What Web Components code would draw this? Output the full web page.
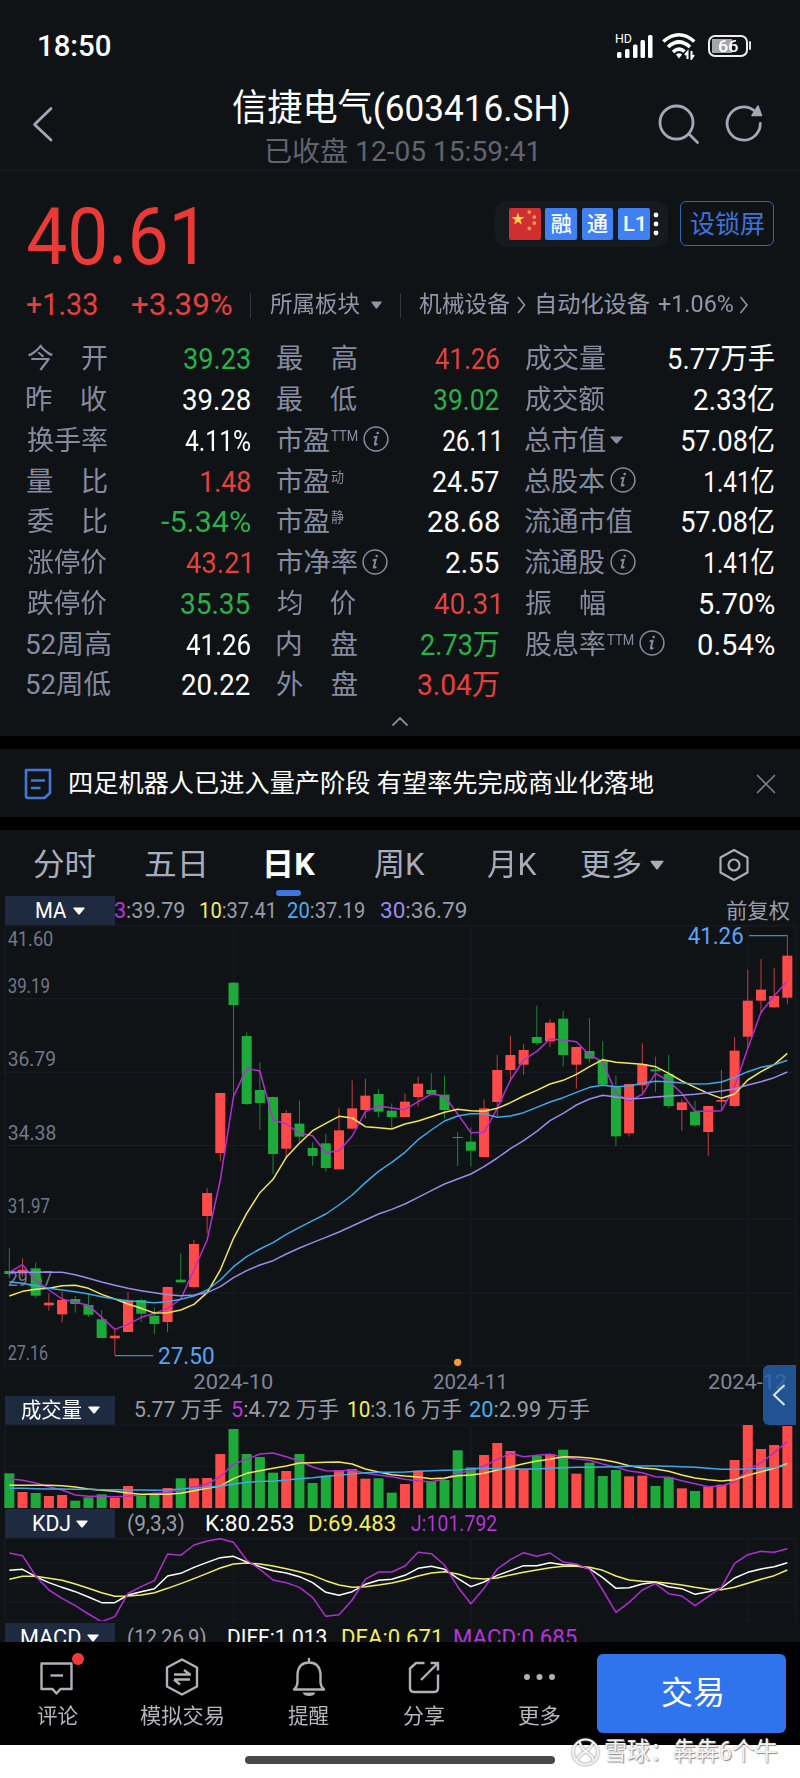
<!DOCTYPE html>
<html lang="zh-CN">
<head>
<meta charset="utf-8">
<title>信捷电气</title>
<style>
html,body{margin:0;background:#000}
body{width:800px;height:1778px;overflow:hidden;font-family:Roboto,"Noto Sans CJK SC",sans-serif;color:#fff}
</style>
</head>
<body>
<stock-app></stock-app>
<script>
const make = (name, html, after) => {
  const tpl = document.createElement('template');
  tpl.innerHTML = html;
  customElements.define(name, class extends HTMLElement {
    connectedCallback() {
      if (this.shadowRoot) return;
      this.attachShadow({mode: 'open'}).append(tpl.content.cloneNode(true));
      if (after) after(this, this.shadowRoot);
    }
  });
};

/* Text whose ink spans exactly `w` pixels. */
const ctx = document.createElement('canvas').getContext('2d');
make('fit-text', `<style>:host{display:inline-block;white-space:nowrap;flex:none}
span{display:inline-block;transform-origin:0 50%}</style><span><slot></slot></span>`, (el, root) => {
  const w = +el.getAttribute('w');
  const s = getComputedStyle(el);
  ctx.font = `${s.fontWeight} ${s.fontSize} ${s.fontFamily}`;
  const m = ctx.measureText(el.textContent);
  const k = w / (m.actualBoundingBoxLeft + m.actualBoundingBoxRight);
  el.style.width = w + 'px';
  root.querySelector('span').style.transform = `translateX(${m.actualBoundingBoxLeft * k}px) scaleX(${k})`;
});

make('down-arrow', `<style>:host{display:block;flex:none;width:12px;height:8px}svg{display:block;width:100%;height:100%}</style>
<svg viewBox="0 0 12 8" preserveAspectRatio="none"><path d="M1 .5H11Q12 .6 11.5 1.4L6.8 7.2Q6 8 5.2 7.2L.5 1.4Q0 .6 1 .5Z" fill="currentColor"/></svg>`);

make('info-icon', `<style>:host{display:block;flex:none;width:26px;height:26px;margin-top:-3px}svg{display:block}</style>
<svg width="26" height="26" viewBox="0 0 26 26" fill="none" stroke="#868ba0"><circle cx="13" cy="13" r="11.9" stroke-width="1.5"/><path d="M10.6 11.4L13.6 10.8L11.8 18Q11.8 19.6 14.4 17.8" stroke-width="1.9"/><circle cx="14.7" cy="7" r="1.3" fill="#868ba0" stroke="none"/></svg>`);

make('status-bar', `<style>:host{display:flex;box-sizing:border-box;height:72px;padding:19px 49px 0 39px;align-items:center;font-size:29px;font-weight:500;line-height:40px}
.sp{flex:1}svg{display:block;flex:none}.bat{width:40px;height:22px;box-sizing:border-box;border:2px solid #eee;border-radius:7px;margin-left:12px;display:flex;align-items:center;justify-content:center;background:linear-gradient(90deg,#a6a6a9 63%,transparent 63%) 2px 2px/32px 14px no-repeat;font-size:17px;line-height:18px}
.nub{width:2px;height:9px;background:#ddd;border-radius:1px;margin-left:1px}</style>
<fit-text w="71">18:50</fit-text><div class="sp"></div>
<svg width="38" height="28" viewBox="0 0 38 28"><g fill="#fff"><rect x="2" y="20" width="4.5" height="6" rx="1.5"/><rect x="10" y="17" width="4.5" height="9" rx="1.5"/><rect x="18" y="12.5" width="4.5" height="13.500" rx="1.5"/><rect x="25.500" y="8" width="4.500" height="18" rx="1.500"/><rect x="33" y="3" width="4.500" height="23" rx="1.500"/></g><text x="0" y="11" font-size="12.500" font-weight="400" textLength="17" lengthAdjust="spacingAndGlyphs" fill="#fff">HD</text></svg>
<svg style="margin-left:9px" width="34" height="28" viewBox="0 0 34 28" fill="none" stroke="#fff" stroke-width="3.600"><path d="M1.300 9.500Q17 -4 32.300 9.500"/><path d="M6 15Q17 5 28 15"/><path d="M11 20Q17 14.500 22.500 19.500"/><path d="M14 22.500L17 26.500L20 22.500Q17 20 14 22.500Z" fill="#fff" stroke="none"/><path d="M25.500 27V20L23 23M29.500 19V26.500L32 23" stroke-width="2"/></svg>
<div class="bat"><fit-text w="20">66</fit-text></div><div class="nub"></div>`);

make('title-bar', `<style>:host{display:flex;box-sizing:border-box;height:99px;border-bottom:1px solid #1c1e23;padding:0 37px 0 32px}
.t{width:336px;margin-left:179px;padding-top:15px;display:flex;flex-direction:column;align-items:center}
.n{font-size:37px;line-height:43px}.s{font-size:27px;line-height:34px;color:#606370;margin-top:5px}
svg{display:block}.b{margin-top:34px}.r{display:flex;gap:25px;margin:31px 0 0 auto}</style>
<svg class="b" width="22" height="38" viewBox="0 0 22 38" fill="none" stroke="#a4a7b8" stroke-width="2.800" stroke-linecap="round" stroke-linejoin="round"><path d="M19 2.500L2.500 18.500L19 34"/></svg>
<div class="t"><fit-text class="n" w="336">信捷电气(603416.SH)</fit-text><fit-text class="s" w="270">已收盘 12-05 15:59:41</fit-text></div>
<div class="r"><svg width="42" height="42" viewBox="0 0 42 42" fill="none" stroke="#a4a7b8" stroke-width="2.800" stroke-linecap="round"><circle cx="18.500" cy="19.500" r="16.500"/><path d="M31 31L39.500 39.500"/></svg>
<svg width="38" height="42" viewBox="0 0 38 42" fill="none" stroke="#a4a7b8" stroke-width="2.800" stroke-linecap="round"><path d="M29 7.500A16.600 16.600 0 1 0 35.300 20.500"/><path d="M33 3L36.500 12.500H27Z" fill="#a4a7b8" stroke-width="1.500" stroke-linejoin="round"/></svg></div>`);

make('quote-head', `<style>:host{display:block;height:168px}
.a{display:flex;height:104px;padding:0 26px 0 28px;justify-content:space-between}
.p{font-size:80px;line-height:82px;color:#ea3a38;margin-top:25px}
.r{display:flex;gap:12px;margin-top:29.500px}
.pill{display:flex;box-sizing:border-box;width:173px;height:46px;padding:7px 0 0 14px;border-radius:12px;background:#171a1e;gap:4.600px}
.k{width:31.700px;height:32px;border-radius:2px;background:#3f80f2;display:flex;justify-content:center;align-items:center;font-size:21px;font-weight:500;line-height:32px}
.f{background:#cf2f30}
.d{box-sizing:border-box;width:94px;height:45px;border:1.500px solid #3663b4;border-radius:6px;color:#3d74d8;font-size:25px;line-height:45px;text-align:center}
.b{display:flex;align-items:center;height:44px;padding-top:8px;padding-left:27px;font-size:23px;color:#9296a8;line-height:40px}
.red{color:#e6413f;font-size:31px}.sep{width:1px;height:25px;background:#343743}.b svg{display:block}</style>
<div class="a"><fit-text class="p" w="167">40.61</fit-text><div class="r"><div class="pill">
<div class="k f"><svg width="32" height="32" viewBox="0 0 32 32"><path d="M9 4.500L10.500 9L15.500 9L11.500 12L13 16.500L9 13.700L5 16.500L6.500 12L2.500 9L7.500 9Z" fill="#ffd84a"/><g fill="#f0a040"><circle cx="20.500" cy="4" r="1.900"/><circle cx="25.500" cy="9" r="1.900"/><circle cx="25.500" cy="15" r="1.900"/><circle cx="20.500" cy="20.500" r="1.900"/></g></svg></div>
<div class="k">融</div><div class="k">通</div><div class="k"><fit-text w="19">L1</fit-text></div>
<svg style="margin-left:-1px" width="6" height="32" viewBox="0 0 6 32" fill="#fff"><circle cx="3" cy="7" r="2.400"/><circle cx="3" cy="16" r="2.400"/><circle cx="3" cy="25" r="2.400"/></svg></div>
<div class="d"><fit-text w="73">设锁屏</fit-text></div></div></div>
<div class="b"><fit-text class="red" w="70">+1.33</fit-text><fit-text class="red" w="100" style="margin-left:35px">+3.39%</fit-text><div class="sep" style="margin:0 19px 0 18px"></div><fit-text w="90">所属板块</fit-text><down-arrow style="width:11px;margin:0 18px 0 11px"></down-arrow><div class="sep"></div><fit-text w="91" style="margin-left:18px">机械设备</fit-text><svg style="margin:0 11px 0 7px" width="9" height="18" viewBox="0 0 9 18" fill="none" stroke="#9296a8" stroke-width="1.600"><path d="M1 1L7.500 9L1 17"/></svg><fit-text w="113">自动化设备</fit-text><fit-text w="75" style="margin:0 6px 0 8px">+1.06%</fit-text><svg width="10" height="18" viewBox="0 0 9 18" fill="none" stroke="#9296a8" stroke-width="1.600"><path d="M1 1L7.500 9L1 17"/></svg></div>`);

/* One metric: label (with optional superscript and marker) and value. */
make('metric-cell', `<style>:host{display:flex;align-items:center;justify-content:space-between;height:40.750px;line-height:38px;font-size:29px}
.l{display:flex;align-items:center;color:#868ba0;font-size:27px}.sup{font-size:14px;line-height:15px;align-self:flex-start;margin:7px 0 0 2px}
info-icon{margin-left:5px}down-arrow{margin-left:5px;width:13px;margin-top:-2px}</style><div class="l"></div>`, (el, root) => {
  const [label, lw, sup, sw, mark, val, vw, tone] = el.dataset.m.split('|');
  root.querySelector('.l').innerHTML = `<fit-text w="${lw}">${label}</fit-text>` +
    (sup ? `<fit-text class="sup" w="${sw}">${sup}</fit-text>` : '') +
    (mark === 'i' ? '<info-icon></info-icon>' : mark === 'v' ? '<down-arrow></down-arrow>' : '');
  const v = document.createElement('fit-text');
  v.setAttribute('w', vw); v.textContent = val;
  v.style.color = {r: '#e6413f', g: '#2bb04a', w: '#fff'}[tone];
  root.append(v);
});

const METRICS = [
  ['今　开|80||||39.23|66|g','最　高|80||||41.26|64|r','成交量|80||||5.77万手|105|w'],
  ['昨　收|80||||39.28|67|w','最　低|80||||39.02|65|g','成交额|80||||2.33亿|80|w'],
  ['换手率|80||||4.11%|65|w','市盈|52|TTM|27|i|26.11|56|w','总市值|80|||v|57.08亿|92|w'],
  ['量　比|80||||1.48|49|r','市盈|52|动|13||24.57|66|w','总股本|80|||i|1.41亿|69|w'],
  ['委　比|80||||-5.34%|89|g','市盈|52|静|13||28.68|71|w','流通市值|107||||57.08亿|92|w'],
  ['涨停价|80||||43.21|64|r','市净率|80|||i|2.55|53|w','流通股|80|||i|1.41亿|69|w'],
  ['跌停价|80||||35.35|69|g','均　价|79||||40.31|65|r','振　幅|80||||5.70%|74|w'],
  ['52周高|84||||41.26|64|w','内　盘|80||||2.73万|78|g','股息率|80|TTM|27|i|0.54%|76|w'],
  ['52周低|84||||20.22|68|w','外　盘|80||||3.04万|81|r','']
];
make('metric-table', `<style>:host{display:block;height:397px}.g{display:grid;grid-template-columns:223.500px 222px 248.500px;column-gap:26.500px;margin-left:26.500px}
svg{display:block;margin:10px auto 0}</style><div class="g"></div><svg width="18" height="11" viewBox="0 0 18 11" fill="none" stroke="#868ba0" stroke-width="1.800"><path d="M1.500 9.500L9 2L16.500 9.500"/></svg>`, (el, root) => {
  root.querySelector('.g').innerHTML = METRICS.flat().map(m => m ? `<metric-cell data-m="${m}"></metric-cell>` : '').join('');
});

make('news-strip', `<style>:host{display:flex;box-sizing:border-box;height:68px;padding:1px 24px 0;align-items:center;background:#101316;margin:13px 0;font-size:25px;line-height:40px}
svg{display:block;flex:none}fit-text{margin-left:18px}.x{margin-left:auto}</style>
<svg width="28" height="32" viewBox="0 0 28 32" fill="none" stroke="#4478d8" stroke-width="2.600"><path d="M2 2H26V25L20.500 30H4Q2 30 2 28Z" stroke-linejoin="round"/><path d="M7 12.500H21M7 20H16.500" /></svg>
<fit-text w="584">四足机器人已进入量产阶段 有望率先完成商业化落地</fit-text>
<svg class="x" width="20" height="20" viewBox="0 0 20 20" stroke="#777b90" stroke-width="1.600"><path d="M1 1L19 19M19 1L1 19"/></svg>`);

make('period-tabs', `<style>:host{display:flex;box-sizing:border-box;height:66px;padding:4px 0 0 34px;align-items:center;font-size:31px;line-height:44px;color:#a9acbb;position:relative}
.on{color:#fff;font-weight:700}.bar{position:absolute;left:275.500px;top:60px;width:25px;height:6px;border-radius:3px;background:#3f74dc}svg{display:block;margin-left:54px}</style>
<fit-text w="61">分时</fit-text><fit-text w="59" style="margin-left:50px">五日</fit-text><fit-text class="on" w="49" style="margin-left:62px">日K</fit-text><fit-text w="50" style="margin-left:60px">周K</fit-text><fit-text w="50" style="margin-left:62px">月K</fit-text><fit-text w="60" style="margin-left:44px">更多</fit-text><down-arrow style="width:14px;height:10px;margin-left:9px"></down-arrow>
<svg width="32" height="34" viewBox="0 0 32 34" fill="none" stroke="#a9acbb" stroke-width="2.200" stroke-linejoin="round"><path d="M16 2L29.500 9.500V24.500L16 32L2.500 24.500V9.500Z"/><circle cx="16" cy="17" r="5.500"/></svg><div class="bar"></div>`);

make('chart-head', `<style>:host{display:flex;height:29px;align-items:center;font-size:22px;line-height:28px;color:#999ca8;padding-left:5px}
.box{display:flex;width:110px;height:29px;background:#1e2a3f;align-items:center;justify-content:center;gap:6px;color:#fff}</style>
<div class="box"><slot name="name"></slot><down-arrow></down-arrow></div><slot></slot>`);

const X = i => 28 + 39.56 * i;
const CANDLES = `g1045,1135,1113,1122 r1075,1130,1109,1120 g1088,1195,1105,1187 r1180,1232,1208,1216 r1175,1267,1200,1243 g1188,1238,1197,1212 g1182,1250,1215,1244 g1230,1314,1258,1314 r1290,1367,1307,1315 r1177,1296,1202,1296 g1195,1267,1200,1241 g1222,1302,1247,1272 r1160,1296,1161,1266 g1060,1148,1139,1147 r1020,1165,1032,1161 r865,1000,879,948 r578,783,579,759 g247,585,248,315 g397,615,408,612 g487,690,570,609 g590,822,591,762 r630,772,639,746 g602,725,671,710 g727,797,744,768 g702,815,730,804 r625,808,691,808 r541,688,625,686 r536,655,587,630 g567,652,582,635 g610,685,632,651 r580,652,605,651 r530,620,551,591 g519,585,570,582 g526,655,584,630 g697,798,711,714 g683,800,725,752 r598,771,625,771 r465,650,510,606 r407,545,465,510 r432,524,450,494 g317,435,411,429 r357,441,368,424 g333,500,356,465 r440,566,441,494 g354,488,453,476 g423,558,480,554 g527,738,558,709 r550,710,552,700 r430,580,492,556 g470,575,508,514 g465,624,522,618 r598,692,607,630 g602,680,635,676 r616,768,618,696 r510,630,600,605 r411,621,452,618 r209,445,302,410 r177,340,269,302 r204,325,288,322 r107,312,167,293`
  .split(' ').map(s => [s[0], ...s.slice(1).split(',').map(Number)]);
const VOLUME = [280,336,339,348,345,362,352,343,353,318,346,345,324,295,295,294,222,147,222,231,278,273,222,309,287,270,267,296,295,338,312,272,305,300,211,262,225,189,213,268,227,222,209,281,248,288,270,289,287,318,292,325,333,320,314,240,135,207,195,138];
const MA = {
  '#b02ed2': [1117,1094,1142,1170,1197,1207,1216,1252,1288,1273,1252,1240,1225,1197,1110,1020,840,590,505,513,660,672,700,707,758,752,708,635,618,624,629,605,582,588,642,698,697,625,540,480,454,417,420,425,465,485,580,603,583,520,543,580,634,634,632,560,445,337,288,243],
  '#f3e55c': [1188,1174,1168,1165,1157,1156,1165,1183,1197,1212,1225,1239,1238,1230,1213,1178,1110,1015,940,878,838,772,730,692,670,649,654,680,683,687,672,663,650,637,628,632,634,625,608,588,571,552,541,523,500,479,487,490,493,500,520,543,562,580,595,582,540,515,494,460],
  '#3fa9ea': [1145,1150,1157,1165,1170,1175,1182,1190,1197,1202,1205,1208,1205,1198,1188,1170,1140,1100,1070,1047,1028,1003,982,962,942,915,885,848,814,787,757,719,690,663,648,641,641,652,648,638,622,606,593,577,562,556,560,558,550,544,545,549,552,551,546,532,515,502,494,481],
  '#9a8aec': [1117,1117,1117,1117,1117,1124,1135,1146,1156,1165,1172,1178,1184,1187,1185,1178,1160,1133,1112,1095,1082,1062,1044,1028,1012,996,978,960,942,928,912,892,872,852,837,822,800,774,746,722,694,662,640,615,597,586,591,597,595,591,588,586,583,578,573,567,555,545,533,516]
};
const VMA = {
  '#b02ed2': [296,301,309,320,330,345,349,349,350,349,344,340,338,328,322,312,290,252,238,222,219,230,243,261,272,273,270,280,285,290,298,303,305,297,280,272,258,238,220,230,226,223,232,237,241,252,262,273,278,290,292,302,311,320,318,305,270,248,218,184],
  '#f3e55c': [316,316,316,316,317,321,327,331,334,339,343,343,343,340,332,325,318,296,280,272,265,258,249,248,247,246,252,267,276,284,288,291,296,294,287,285,280,270,261,251,243,238,230,231,234,239,247,257,264,267,274,285,294,299,303,299,286,275,265,250],
  '#3fa9ea': [325,325,326,327,327,328,328,329,329,330,330,331,330,327,325,322,318,313,307,304,304,300,296,293,289,286,282,278,277,277,276,274,272,271,270,267,265,266,267,267,267,265,263,262,262,261,260,259,258,258,259,260,262,265,268,268,267,265,263,256]
};
const KDJ = {
  '#fff': [571,568,590,608,622,635,651,668,668,645,635,626,588,580,562,547,533,529,546,560,572,579,590,608,637,646,635,613,601,598,586,565,559,568,595,620,606,586,572,557,557,548,554,556,566,593,625,623,612,607,620,626,643,635,624,594,577,567,560,548],
  '#f0ee62': [598,589,589,595,601,612,625,638,649,648,645,638,625,611,596,580,564,552,549,552,558,566,575,586,602,615,622,620,615,609,600,588,579,575,582,594,597,594,585,577,570,563,559,559,562,571,588,600,604,606,610,615,622,628,629,622,610,598,587,570],
  '#b02ed2': [519,527,588,630,655,677,702,725,710,640,620,602,522,526,495,483,476,487,540,568,600,608,622,652,709,704,660,598,576,576,558,517,521,555,620,671,625,567,539,518,529,519,546,552,568,630,697,667,630,611,641,648,677,650,622,550,524,514,517,506]
};
const RED = '#ff4a4a', GREEN = '#1eaa3a';
const lines = set => Object.entries(set).map(([c, ys]) => `<polyline fill="none" stroke="${c}" stroke-width="4.500" stroke-linejoin="round" points="${ys.map((y, i) => X(i) + ',' + y).join(' ')}"/>`).join('');
const grid = (ys, y0, y1) => `<g stroke="#181b25" stroke-width="3.500">${ys.map(y => `<path d="M15 ${y}H2388"/>`).join('')}${[15, 701, 1413, 2243, 2388].map(x => `<path d="M${x} ${y0}V${y1}"/>`).join('')}</g>`;
const label = (t, x, y, w, size, c) => `<text x="${x}" y="${y}" font-size="${size}" textLength="${w}" lengthAdjust="spacingAndGlyphs" fill="${c}">${t}</text>`;
const svgCss = '<style>:host{display:block}svg{display:block;width:800px}</style>';

make('price-chart', svgCss + '<div></div>', (el, root) => {
  const prices = [['41.60',138,137],['39.19',278,127],['36.79',498,145],['34.38',719,146],['31.97',938,127],['29.57',1158,135],['27.16',1380,121]];
  root.querySelector('div').innerHTML = `<svg height="470" viewBox="0 75 2400 1410">${grid([77, 296, 517, 737, 958, 1178, 1398], 77, 1398)}
  ${prices.map(([t, y, w]) => label(t, 23, y, w, 61, '#737789')).join('')}
  ${CANDLES.map(([c, h, l, a, b], i) => {
    const f = c === 'r' ? RED : GREEN, x = X(i);
    return `<path d="M${x} ${h}V${l}" stroke="${f}" stroke-width="3" opacity=".75"/><rect x="${x - 15}" y="${a}" width="30" height="${b - a}" fill="${f}"/>`;
  }).join('')}${lines(MA)}
  <g fill="none" stroke="#4386cf" stroke-width="3.500"><path d="M345 1367H460"/><path d="M2247 107H2362"/></g>
  ${label('27.50', 474, 1393, 170, 72, '#5ba3f5')}${label('41.26', 2063, 133, 168, 72, '#5ba3f5')}
  <circle cx="1373" cy="1387" r="11" fill="#f79a35"/>
  ${label('2024-10', 580, 1466, 240, 62, '#82859a')}${label('2024-11', 1299, 1466, 224, 62, '#82859a')}${label('2024-12', 2124, 1466, 237, 62, '#82859a')}</svg>`;
});
make('volume-chart', svgCss + '<div></div>', (el, root) => {
  root.querySelector('div').innerHTML = `<svg height="85" viewBox="0 132 2400 255">${grid([135, 258, 384], 135, 384)}
  ${VOLUME.map((y, i) => `<rect x="${X(i) - 15}" y="${y}" width="30" height="${384 - y}" fill="${CANDLES[i][0] === 'r' ? RED : GREEN}"/>`).join('')}${lines(VMA)}</svg>`;
});
make('kdj-chart', svgCss + '<div></div>', (el, root) => {
  root.querySelector('div').innerHTML = `<svg height="83" viewBox="0 474 2400 249">${grid([476, 549, 608, 667, 723], 476, 723)}${lines(KDJ)}</svg>`;
});

make('chart-panel', `<style>:host{display:block;position:relative;height:811.500px;overflow:hidden;background:#101316}
.m{color:#b834d8}.y{color:#f3ee5c}.b{color:#46aeee}.p{color:#9a8aec}.w{color:#fff}
.handle{position:absolute;left:763px;top:535px;width:33px;height:60px;border-radius:6px 0 0 6px;background:rgba(38,98,174,.82);display:flex;align-items:center;justify-content:center}
.handle svg{margin-right:2px}.vol{padding-top:1px;height:28px}.macd{height:33px}</style>
<period-tabs></period-tabs>
<chart-head><fit-text slot="name" w="31">MA</fit-text><fit-text w="69"><span class="m">3</span>:39.79</fit-text><fit-text w="73" style="margin-left:16px"><span class="y">10</span>:37.41</fit-text><fit-text w="76" style="margin-left:15px"><span class="b">20</span>:37.19</fit-text><fit-text w="85" style="margin-left:17px"><span class="p">30</span>:36.79</fit-text><fit-text w="63" style="margin-left:261px;font-size:21px">前复权</fit-text></chart-head>
<price-chart></price-chart>
<chart-head class="vol"><fit-text slot="name" w="61" style="font-size:21px">成交量</fit-text><fit-text w="87" style="margin-left:20px">5.77 万手</fit-text><fit-text w="106" style="margin-left:10px"><span class="m">5</span>:4.72 万手</fit-text><fit-text w="113" style="margin-left:10px"><span class="y">10</span>:3.16 万手</fit-text><fit-text w="119" style="margin-left:9px"><span class="b">20</span>:2.99 万手</fit-text></chart-head>
<volume-chart></volume-chart>
<chart-head><fit-text slot="name" w="37">KDJ</fit-text><fit-text w="56" style="margin-left:13px">(9,3,3)</fit-text><fit-text class="w" w="87" style="margin-left:22px">K:80.253</fit-text><fit-text class="y" w="86" style="margin-left:16px">D:69.483</fit-text><fit-text class="m" w="86" style="margin-left:16px">J:101.792</fit-text></chart-head>
<kdj-chart></kdj-chart>
<chart-head class="macd"><fit-text slot="name" w="60">MACD</fit-text><fit-text w="78" style="margin-left:13px">(12,26,9)</fit-text><fit-text class="w" w="98" style="margin-left:22px">DIFF:1.013</fit-text><fit-text class="y" w="97" style="margin-left:16px">DEA:0.671</fit-text><fit-text class="m" w="123" style="margin-left:15px">MACD:0.685</fit-text></chart-head>
<div class="handle"><svg width="14" height="22" viewBox="0 0 14 22" fill="none" stroke="#dce6f5" stroke-width="2"><path d="M12.500 1L2 11L12.500 21"/></svg></div>`);

make('nav-item', `<style>:host{display:flex;flex-direction:column;align-items:center;font-size:21px;line-height:28px;color:#b6b6bb}::slotted(svg){display:block;margin-bottom:5px}</style><slot></slot>`);
make('bottom-nav', `<style>:host{display:flex;box-sizing:border-box;height:103.500px;padding:15.500px 0 0 34px;background:#000}
nav-item{flex:none}.go{box-sizing:border-box;width:189px;height:79px;margin:-3px 0 0 37px;border-radius:6px;background:#2f74ec;font-size:32px;line-height:78px;text-align:center}
svg{fill:none;stroke:#b0b0b6;stroke-width:2.400;stroke-linejoin:round;overflow:visible}</style>
<nav-item><svg width="46" height="40" viewBox="0 0 46 40"><path d="M7.500 6.500H37.500V32H26.500L22.500 36.500L18.500 32H7.500Z"/><path d="M16.500 18.500H29"/><circle cx="44" cy="2" r="6" fill="#f03c38" stroke="none"/></svg><fit-text w="41">评论</fit-text></nav-item>
<nav-item style="margin-left:60px"><svg width="36" height="40" viewBox="0 0 36 40"><path d="M18 2.500L33 10.500V29.500L18 37.500L3 29.500V10.500Z"/><path d="M10 17.500H26L20 13M26 22.500H10M10 22.500L16 27.500"/></svg><fit-text w="83">模拟交易</fit-text></nav-item>
<nav-item style="margin-left:65px"><svg width="36" height="40" viewBox="0 0 36 40"><path d="M18 2V5M3 32.500H33Q29.500 29.500 29.500 25V17Q28.500 5.500 18 5.500Q7.500 5.500 6.500 17V25Q6.500 29.500 3 32.500Z" stroke-linecap="round"/><path d="M11.500 35.500H24.500Q23 39 18 39Q13 39 11.500 35.500Z" fill="#b0b0b6" stroke="none"/></svg><fit-text w="41">提醒</fit-text></nav-item>
<nav-item style="margin-left:74px"><svg width="36" height="40" viewBox="0 0 36 40"><path d="M18.500 6H10L4 11.500V31Q4 35 8 35H28Q32 35 32 31V17.500"/><path d="M15 23L32 6M24.500 6H32V13.500"/></svg><fit-text w="41">分享</fit-text></nav-item>
<nav-item style="margin-left:74px"><svg width="36" height="40" viewBox="0 0 36 40"><g fill="#b0b0b6" stroke="none"><circle cx="6" cy="20" r="3"/><circle cx="18.500" cy="20" r="3"/><circle cx="31" cy="20" r="3"/></g></svg><fit-text w="42">更多</fit-text></nav-item>
<div class="go"><fit-text w="60">交易</fit-text></div>`);

make('home-strip', `<style>:host{display:block;position:relative;height:33px;background:#fff;padding-top:11px;box-sizing:border-box}
.pill{width:310px;height:8px;border-radius:4px;background:#484848;margin:0 auto}
.mark{position:absolute;left:571px;top:-9px;display:flex;align-items:center;gap:4px;font-size:25px;line-height:32px;color:#f4f4f4;text-shadow:1px 1px 1px #888,0 0 1px #aaa}
svg{display:block;filter:drop-shadow(0 0 1px #777)}</style>
<div class="pill"></div><div class="mark"><svg width="30" height="30" viewBox="0 0 30 30" fill="none" stroke="#f3f3f3" stroke-width="2.200"><circle cx="14.500" cy="15" r="12.500"/><path d="M8 4Q11 12 15 15Q22 18 23 25M22 6Q18 13 14 15Q8 18 5 24"/></svg><fit-text w="172">雪球：犇犇6个牛</fit-text></div>`);

make('stock-app', `<style>:host{display:block;width:800px;height:1778px;background:#000}.top{background:#101316}</style>
<div class="top"><status-bar></status-bar><title-bar></title-bar><quote-head></quote-head><metric-table></metric-table></div>
<news-strip></news-strip><chart-panel></chart-panel><bottom-nav></bottom-nav><home-strip></home-strip>`);
</script>
</body>
</html>
